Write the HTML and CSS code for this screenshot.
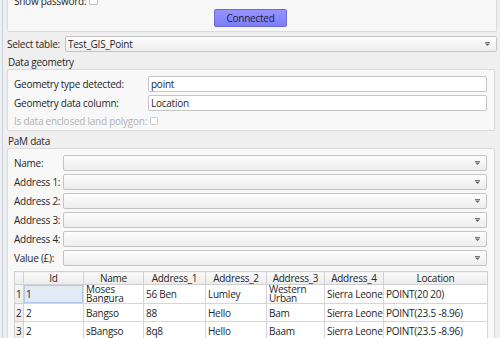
FILE: index.html
```html
<!DOCTYPE html>
<html>
<head>
<meta charset="utf-8">
<link rel="stylesheet" href="styles.css">
</head>
<body>
<div class="app">
  <div class="group conn">
    <div class="pw"><span>Show password:</span><span class="check"></span></div>
    <div class="btnrow"><button class="btn">Connected</button></div>
  </div>

  <div class="selrow">
    <span class="sel-lbl">Select table:</span>
    <div class="combo"><span>Test_GIS_Point</span><svg class="arrow" width="5" height="4" viewBox="0 0 5 4"><path d="M0 0.5h5" stroke="#777" stroke-width="1"/><path d="M0 1.5h5l-2.5 2.5z" fill="#666"/></svg></div>
  </div>

  <div class="title">Data geometry</div>
  <div class="group geo">
    <div class="frow"><span class="flbl">Geometry type detected:</span><div class="edit">point</div></div>
    <div class="frow"><span class="flbl">Geometry data column:</span><div class="edit">Location</div></div>
    <div class="frow dis"><span class="flbl">Is data enclosed land polygon:</span><span class="check small"></span></div>
  </div>

  <div class="title">PaM data</div>
  <div class="group pam">
    <div class="prow"><span class="plbl">Name:</span><div class="combo"><span></span><svg class="arrow" width="5" height="4" viewBox="0 0 5 4"><path d="M0 0.5h5" stroke="#777" stroke-width="1"/><path d="M0 1.5h5l-2.5 2.5z" fill="#666"/></svg></div></div>
    <div class="prow"><span class="plbl">Address 1:</span><div class="combo"><span></span><svg class="arrow" width="5" height="4" viewBox="0 0 5 4"><path d="M0 0.5h5" stroke="#777" stroke-width="1"/><path d="M0 1.5h5l-2.5 2.5z" fill="#666"/></svg></div></div>
    <div class="prow"><span class="plbl">Address 2:</span><div class="combo"><span></span><svg class="arrow" width="5" height="4" viewBox="0 0 5 4"><path d="M0 0.5h5" stroke="#777" stroke-width="1"/><path d="M0 1.5h5l-2.5 2.5z" fill="#666"/></svg></div></div>
    <div class="prow"><span class="plbl">Address 3:</span><div class="combo"><span></span><svg class="arrow" width="5" height="4" viewBox="0 0 5 4"><path d="M0 0.5h5" stroke="#777" stroke-width="1"/><path d="M0 1.5h5l-2.5 2.5z" fill="#666"/></svg></div></div>
    <div class="prow"><span class="plbl">Address 4:</span><div class="combo"><span></span><svg class="arrow" width="5" height="4" viewBox="0 0 5 4"><path d="M0 0.5h5" stroke="#777" stroke-width="1"/><path d="M0 1.5h5l-2.5 2.5z" fill="#666"/></svg></div></div>
    <div class="prow"><span class="plbl">Value (£):</span><div class="combo"><span></span><svg class="arrow" width="5" height="4" viewBox="0 0 5 4"><path d="M0 0.5h5" stroke="#777" stroke-width="1"/><path d="M0 1.5h5l-2.5 2.5z" fill="#666"/></svg></div></div>

    <table class="grid">
      <colgroup>
        <col class="c-rh"><col class="c-id"><col class="c-name"><col class="c-a1"><col class="c-a2"><col class="c-a3"><col class="c-a4"><col class="c-loc">
      </colgroup>
      <thead>
        <tr><th class="corner"></th><th>Id</th><th>Name</th><th>Address_1</th><th>Address_2</th><th>Address_3</th><th>Address_4</th><th>Location</th></tr>
      </thead>
      <tbody>
        <tr><td class="rh">1</td><td class="sel">1</td><td class="wrap">Moses Bangura</td><td>56 Ben</td><td>Lumley</td><td class="wrap">Western Urban</td><td>Sierra Leone</td><td>POINT(20 20)</td></tr>
        <tr><td class="rh">2</td><td>2</td><td>Bangso</td><td>88</td><td>Hello</td><td>Bam</td><td>Sierra Leone</td><td>POINT(23.5 -8.96)</td></tr>
        <tr><td class="rh">3</td><td>2</td><td>sBangso</td><td>8q8</td><td>Hello</td><td>Baam</td><td>Sierra Leone</td><td>POINT(23.5 -8.96)</td></tr>
      </tbody>
    </table>
  </div>
</div>
</body>
</html>
```

FILE: styles.css
```css
* { box-sizing: border-box; }
html, body { margin: 0; padding: 0; }
body {
  width: 500px;
  height: 338px;
  overflow: hidden;
  background: #efefef;
  font-family: "Open Sans", "Noto Sans", "DejaVu Sans", sans-serif;
  font-size: 10px;
  letter-spacing: -0.25px;
  line-height: 14px;
  color: #262626;
}
.app {
  height: 338px;
  margin-left: 2px;
  border-left: 1px solid #c9d3df;
  padding: 0 3px 0 4px;
  display: flex;
  flex-direction: column;
}
.group {
  background: #f8f8f8;
  border: 1px solid #dadada;
  border-radius: 2px;
}
.conn {
  margin-top: -9px;
  padding: 2px 6px 4px;
  flex: none;
}
.pw {
  display: flex;
  align-items: center;
  gap: 3px;
  height: 13px;
}
.check {
  width: 9px;
  height: 9px;
  border: 1px solid #bdbdbd;
  background: #fdfdfd;
  border-radius: 1px;
  flex: none;
}
.check.small { width: 8px; height: 8px; border-color: #d0d0d0; margin-left: 2px; }
.btnrow {
  display: flex;
  justify-content: center;
  margin-top: 2px;
}
.btn {
  width: 73px;
  height: 18px;
  margin-left: -3px;
  padding: 0;
  font: inherit;
  letter-spacing: inherit;
  color: #1c1c3c;
  background: linear-gradient(#9494ff, #7d7df8);
  border: 1px solid #6a6ad2;
  border-radius: 2px;
}
.selrow {
  display: flex;
  align-items: center;
  height: 16px;
  margin-top: 4px;
  flex: none;
}
.sel-lbl { width: 58px; flex: none; }
.combo {
  flex: 1;
  height: 16px;
  display: flex;
  align-items: center;
  justify-content: space-between;
  padding: 0 6px 0 2px;
  border: 1px solid #c4c4c4;
  border-radius: 2px;
  background: linear-gradient(#fdfdfd, #ededed);
}
.arrow { flex: none; }
.title {
  height: 14px;
  margin-top: 3px;
  padding-left: 1px;
  flex: none;
}
.geo {
  margin-right: 2px;
  padding: 6px 7px 3px 6px;
  display: flex;
  flex-direction: column;
  gap: 3px;
  flex: none;
}
.frow {
  display: flex;
  align-items: center;
  height: 16px;
}
.frow.dis { height: 13px; color: #b2b2b2; }
.flbl { width: 134px; flex: none; }
.edit {
  flex: 1;
  height: 16px;
  padding: 0 2px;
  line-height: 14px;
  border: 1px solid #c6c6c6;
  border-radius: 2px;
  background: #fff;
}
.pam {
  margin-right: 2px;
  padding: 6px 7px 0 6px;
  display: flex;
  flex-direction: column;
  gap: 3px;
  flex: 1;
}
.prow {
  display: flex;
  align-items: center;
  height: 16px;
  flex: none;
}
.plbl { width: 49px; flex: none; }
.grid {
  margin-top: 2px;
  width: 473px;
  table-layout: fixed;
  border-collapse: collapse;
  border: 1px solid #c4c4c4;
  background: #fff;
}
.c-rh { width: 9px; }
.c-id { width: 60px; }
.c-name { width: 60px; }
.c-a1 { width: 62px; }
.c-a2 { width: 61px; }
.c-a3 { width: 58px; }
.c-a4 { width: 59px; }
.c-loc { width: 104px; }
.grid th {
  height: 13px;
  padding: 0;
  font-weight: normal;
  line-height: 12px;
  text-align: center;
  background: linear-gradient(#fafafa, #ebebeb);
  border: 1px solid #d0d0d0;
}
.grid td {
  height: 18px;
  padding: 0 2px;
  white-space: nowrap;
  overflow: hidden;
  border: 1px solid #d6d6d6;
  vertical-align: middle;
}
.grid td.rh {
  padding: 0 0 0 1px;
  background: linear-gradient(#f6f6f6, #ececec);
  border-color: #d0d0d0;
}
.grid td.sel {
  background: #e0ebf7;
  box-shadow: inset 0 0 0 1px #b3cae6;
}
.grid td.wrap {
  white-space: normal;
  line-height: 9px;
}
```
